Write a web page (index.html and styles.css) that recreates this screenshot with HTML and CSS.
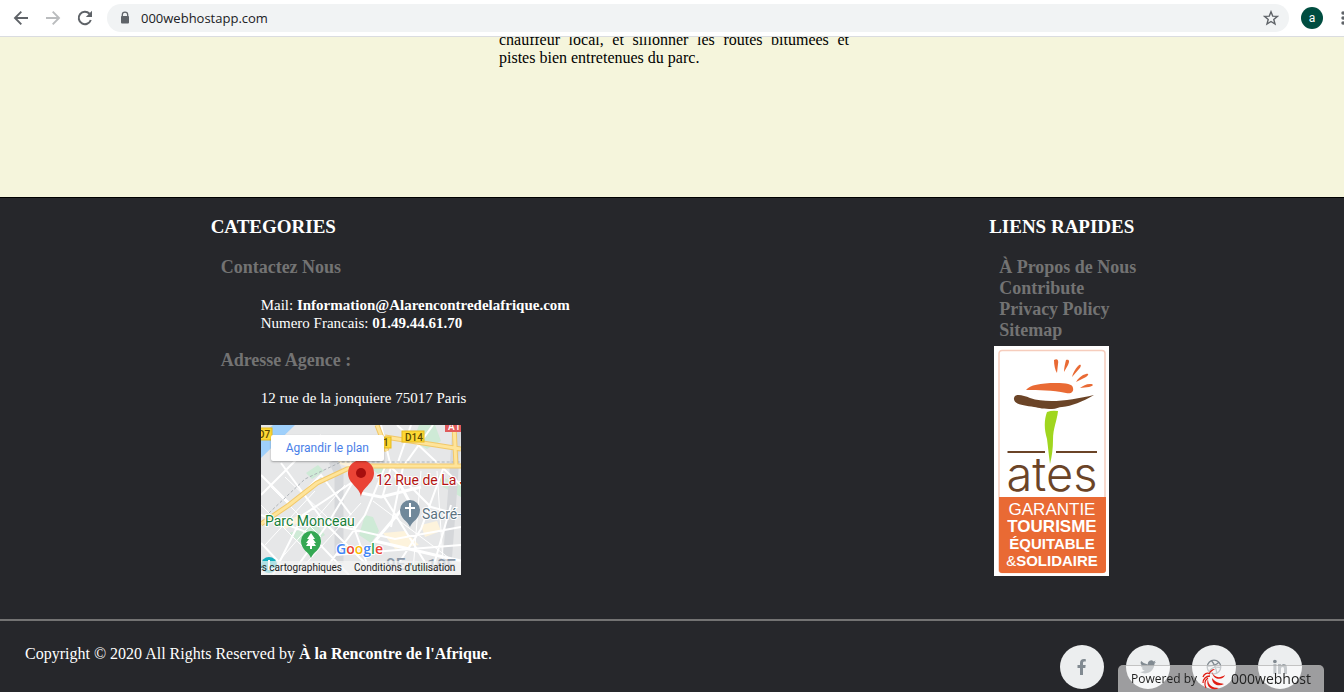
FILE: index.html
```html
<!DOCTYPE html>
<html lang="fr">
<head>
<meta charset="utf-8">
<title>À la Rencontre de l'Afrique</title>
<meta name="viewport" content="width=device-width, initial-scale=1">
<link rel="stylesheet" href="styles.css">
</head>
<body>
<header class="toolbar">
  <button class="tool" type="button" aria-label="Back"><svg viewBox="0 0 20 20"><path d="M17 10H4M10.300 3.700 4 10l6.300 6.300" fill="none" stroke="#5f6368" stroke-width="1.900"/></svg></button>
  <button class="tool" type="button" aria-label="Forward"><svg viewBox="0 0 20 20"><path d="M3 10h13M9.700 3.700 16 10l-6.300 6.300" fill="none" stroke="#babcbe" stroke-width="1.900"/></svg></button>
  <button class="tool" type="button" aria-label="Reload"><svg viewBox="0 0 20 20"><path d="M15.800 12A6.200 6.200 0 1 1 14.500 5.700" fill="none" stroke="#5f6368" stroke-width="2"/><path d="M17 2.800v6.200h-6.200z" fill="#5f6368"/></svg></button>
  <div class="address">
    <svg class="lock" viewBox="0 0 12 14"><path d="M3.300 6V3.800a2.700 2.700 0 0 1 5.400 0V6" fill="none" stroke="#5f6368" stroke-width="1.300"/><rect x="2" y="5" width="8" height="7.500" rx="1" fill="#5f6368"/></svg>
    <input class="url" type="text" value="000webhostapp.com" aria-label="Address">
    <button class="star" type="button" aria-label="Bookmark"><svg viewBox="0 0 16 16"><path d="m8 1.800 1.700 4.300 4.700.3-3.600 3 1.200 4.600L8 11.500 4 14l1.200-4.600-3.600-3 4.700-.3z" fill="none" stroke="#5f6368" stroke-width="1.400"/></svg></button>
  </div>
  <button class="avatar" type="button" aria-label="Profile">a</button>
  <button class="menu" type="button" aria-label="Menu"><svg viewBox="0 0 16 16"><g fill="#5f6368"><circle cx="8" cy="3" r="1.700"/><circle cx="8" cy="8" r="1.700"/><circle cx="8" cy="13" r="1.700"/></g></svg></button>
</header>

<main class="article">
  <p class="article-text">chauffeur local, et sillonner les routes bitumées et pistes bien entretenues du parc.</p>
</main>

<footer class="footer">
  <div class="columns">
    <section>
      <h3 class="title">CATEGORIES</h3>
      <h4 class="subtitle">Contactez Nous</h4>
      <p class="details">Mail: <b>Information@Alarencontredelafrique.com</b><br>Numero Francais: <b>01.49.44.61.70</b></p>
      <h4 class="subtitle">Adresse Agence :</h4>
      <p class="details">12 rue de la jonquiere 75017 Paris</p>
      <div class="map">
        <svg class="map-art" viewBox="0 0 200 150">
          <rect width="200" height="150" fill="#e6e7e8"/>
          <path d="M0 33 34 0H12L0 10z" fill="#9fd0fb"/>
          <g fill="#ceead6">
            <path d="m158 0 16 0 6 16-14 8-14-8zM104 90l8 2 6 14-8 12-12-8zM28 108l28-8 8 10-20 12zM176 50l24 10v12l-18-10zM144 140l16-4 12 14h-28zM45 48l12-8 6 6-12 8zM108 42l18 1-6 8z"/>
          </g>
          <g fill="#fdf3dc"><path d="m122 108 22-2 14 14-24 4zM160 100l16-4 4 10-16 6zM20 98l24-10 6 4-26 12zM86 20l12 16-10 6-12-4z"/></g>
          <path d="M72 36l6 12 0 90M196 0l-4 60-6 80" stroke="#d5d7da" stroke-width="9" fill="none"/>
          <g fill="none" stroke="#fff" stroke-width="2">
            <path d="M0 70 60 10M0 50l30 30 30-30 30 40M20 38l44 60 50 50M0 90l48 18 40 42M12 150l30-60 60-40M60 150l44-60 20-48M90 94l20 56M120 0l10 42-8 28 50 80M130 42l40 40 30 8M136 0l64 60M150 0l-14 40M172 0l-30 42-12 60M182 44l-22 60-30 46M96 36l0 14-30 50-36 50M64 98l70 16 66-12M74 130l126-10M190 80l-20 70M0 118l30 32"/>
            <path d="M100 68l20 4 40-10M134 50l14 26-34 40 86 20" stroke-width="3"/>
          </g>
          <g fill="none" stroke="#fff" stroke-width="1">
            <path d="M0 80l52 52M10 62l50 50M24 52l42 40M4 120l50-54M18 136l66-76M40 144l60-66M160 46l-8 100M176 46l6 90M112 76l80 60"/>
          </g>
          <path d="M8 88 44 54 80 37l120 0" fill="none" stroke="#aeb3b8" stroke-dasharray="3 2"/>
          <g fill="none" stroke-linejoin="round">
            <path d="M0 99 28 80 56 58 86 44 110 41 200 41M116 0l10 26M193 0l2 41M124 12l76 12" stroke="#f2c868" stroke-width="5"/>
            <path d="M0 99 28 80 56 58 86 44 110 41 200 41M116 0l10 26M193 0l2 41M124 12l76 12" stroke="#fee49a" stroke-width="3"/>
          </g>
          <g class="road-label">
            <rect x="-6" y="3" width="17" height="12" fill="#fdd835" stroke="#e5b91e"/><text x="-3" y="13">D7</text>
            <rect x="112" y="12" width="18" height="11" fill="#fdd835" stroke="#e5b91e"/><text x="122" y="21">1</text>
            <rect x="141" y="6" width="22" height="11" fill="#fdd835" stroke="#e5b91e"/><text x="144" y="16">D14</text>
            <rect x="184" y="-5" width="20" height="12" fill="#e05a5a"/><text class="road-white" x="187" y="5">A1</text>
          </g>
          <g class="district"><text x="125" y="145">9E</text><text x="166" y="146">10E</text></g>
          <circle cx="8" cy="140" r="8" fill="#12aebd"/><path d="M8 135v9h6" fill="none" stroke="#fff" stroke-width="2"/>
          <path d="M100 72c-1-10-13-13-13-24a13 13 0 0 1 26 0c0 11-12 14-13 24z" fill="#ea4335"/><circle cx="100" cy="48" r="5" fill="#a50e0e"/>
          <path d="M149 102c-2-6-10-8-10-17a10 10 0 0 1 20 0c0 9-8 11-10 17z" fill="#70889a"/><path d="M149 78v14M144 83h10" stroke="#fff" stroke-width="2"/>
          <path d="M50 133c-2-6-10-8-10-17a10 10 0 0 1 20 0c0 9-8 11-10 17z" fill="#34a853"/><path d="m50 108 4 6h-2l3 4h-2l2 3h-4v3h-2v-3h-4l2-3h-2l3-4h-2z" fill="#fff"/>
          <g class="place"><text x="115" y="60" fill="#b31412">12 Rue de La J</text><text x="4" y="101" fill="#188038">Parc Monceau</text><text x="161" y="94" fill="#5b7280">Sacré-C</text></g>
          <text class="brand" x="75" y="129"><tspan fill="#4285f4">G</tspan><tspan fill="#ea4335">o</tspan><tspan fill="#fbbc05">o</tspan><tspan fill="#4285f4">g</tspan><tspan fill="#34a853">l</tspan><tspan fill="#ea4335">e</tspan></text>
          <rect y="136" width="200" height="14" fill="#f5f5f5" opacity="0.700"/>
          <g class="legal"><text x="81" y="146" text-anchor="end">Données cartographiques</text><text x="93" y="146">Conditions d'utilisation</text></g>
        </svg>
        <a class="map-link" href="#plan">Agrandir le plan</a>
      </div>
    </section>
    <section>
      <h3 class="title">LIENS RAPIDES</h3>
      <ul class="links">
        <li><a href="#propos">À Propos de Nous</a></li>
        <li><a href="#contribute">Contribute</a></li>
        <li><a href="#privacy">Privacy Policy</a></li>
        <li><a href="#sitemap">Sitemap</a></li>
      </ul>
      <svg class="ates" viewBox="0 0 115 230" role="img" aria-label="ATES, garantie tourisme équitable et solidaire">
        <rect width="115" height="230" fill="#fff"/>
        <rect x="5" y="4.500" width="106" height="222" rx="3" fill="none" stroke="#f6cdbd" stroke-width="1.500"/>
        <path d="M5 151h107v73a3 3 0 0 1-3 3H8a3 3 0 0 1-3-3z" fill="#e96a34"/>
        <g fill="#e96a34">
          <path d="M32 44c4-5 14-7 30-7 10 0 17 1 17 5 1 4-2 6-7 5-14-3-27-3-40-3z"/>
          <path d="M60 14c3-2 5 0 4 4l-1 9c-2-3-3-8-3-13zM72 14c3-1 4 1 2 5l-4 7c0-4 1-8 2-12zM84 20c3-3 4 0 1 3l-7 8c1-4 3-8 6-11zM92 28c3-1 3 1 0 3l-10 5c2-4 6-7 10-8zM96 38c4 0 4 2-1 3l-9 1c3-2 6-4 10-4z"/>
        </g>
        <path d="M20 52c1-5 9-3 16 0 18 6 42 2 64-3-12 7-22 11-32 12-3 0-6 2-10 2-8 0-13-1-18-2-10-2-21-2-20-9z" fill="#6b4427"/>
        <path d="M53 66q5-2 11-1c-1 10-5 17-5 29 0 8-1 16-3 24-1-7-2-17-3-25-3-10-3-19 0-27z" fill="#a0d61f"/>
        <path d="M13.500 106h37.500M62 106h41" stroke="#6b4427" stroke-width="2"/>
        <text class="ates-name" x="58" y="145">ates</text>
        <g class="ates-lines"><text class="ates-light" x="58" y="169">GARANTIE</text><text class="ates-bold" x="58" y="186">TOURISME</text><text class="ates-small" x="58" y="203">ÉQUITABLE</text><text class="ates-small" x="58" y="220"><tspan class="ates-amp">&amp;</tspan>SOLIDAIRE</text></g>
      </svg>
    </section>
  </div>
  <div class="bottom">
    <p class="copyright">Copyright © 2020 All Rights Reserved by <b>À la Rencontre de l'Afrique</b>.</p>
    <nav class="social" aria-label="Social">
      <a href="#facebook" aria-label="Facebook"><svg viewBox="0 0 16 16"><path d="M6 16V9H3.500V6H6V4c0-2.600 1.500-4 3.800-4 1 0 2 .2 2 .2v2.400h-1.200c-1.200 0-1.600.7-1.600 1.500V6h2.700l-.4 3H9v7z"/></svg></a>
      <a href="#twitter" aria-label="Twitter"><svg viewBox="0 0 16 16"><path d="M14.400 4.700v.4c0 4.300-3.300 9.300-9.300 9.300A9.300 9.300 0 0 1 0 13c1.700.2 3.400-.3 4.800-1.400A3.300 3.300 0 0 1 1.800 9.300c.5.1 1 .1 1.500-.1A3.300 3.300 0 0 1 .7 6c.4.200 1 .4 1.500.4A3.300 3.300 0 0 1 1.200 2a9.300 9.300 0 0 0 6.700 3.400 3.300 3.300 0 0 1 5.600-3l2.100-.8-1.400 1.800 1.800-.5z"/></svg></a>
      <a href="#dribbble" aria-label="Dribbble"><svg viewBox="0 0 16 16"><g fill="none" stroke="#818a91" stroke-width="1.300"><circle cx="8" cy="8" r="6.800"/><path d="M5.500 1.700C8 4.500 10 9 10.800 14.200M1.300 7c4.500.2 9-.5 11.700-3.800M3.200 12.700C5 9 9 7.200 14.700 8.500"/></g></svg></a>
      <a href="#linkedin" aria-label="LinkedIn"><svg viewBox="0 0 16 16"><path d="M1.400 5.500h3V15h-3zM1 2.500a1.900 1.700 0 1 1 3.800 0 1.900 1.700 0 0 1-3.800 0M6 5.500h3v1.300c.6-1 1.500-1.500 2.800-1.500 2.300 0 3.200 1.400 3.200 4V15h-3v-5.100c0-1.300-.4-2-1.400-2C9.500 7.900 9 8.600 9 10v5H6z"/></svg></a>
    </nav>
  </div>
</footer>

<a class="powered" href="#000webhost">Powered by
  <svg viewBox="0 0 26 24"><g fill="#e01e14"><path d="M11 5c2 5 7 7 13 3-1 5-12 6-13-3z"/><path d="M11 11c3 4 7 5 12 6-5 3-12 1-12-6z"/><path d="M7 12c0 6 4 9 11 9-7 4-14-2-11-9z"/><path d="M8 7c0-3 3-5 6-5-2 1-4 3-6 5z"/></g><path d="M9 7C6 5 3 7 2 10M9 9c-4 0-7 3-7 7M7 11c-3 2-4 6-2 10" fill="none" stroke="#e01e14" stroke-width="1.300"/></svg>
  <span>000webhost</span></a>
</body>
</html>
```

FILE: styles.css
```css
* { box-sizing: border-box; }
body { margin: 0; background: #f5f5dc; color: #000; font: 16px/18px "Liberation Serif", "Times New Roman", serif; overflow-x: hidden; }
h3, h4, p, ul { margin: 0; padding: 0; }
button { padding: 0; border: 0; background: none; }
a { color: inherit; text-decoration: none; }
svg { display: block; }

.toolbar { display: flex; align-items: center; gap: 12px; height: 37px; padding-left: 11px; background: #fff; border-bottom: 1px solid #dadce0; overflow: hidden; }
.tool { flex: none; width: 20px; height: 20px; }
.address { flex: 1; min-width: 0; display: flex; align-items: center; height: 28px; padding: 0 10px 0 12px; border-radius: 14px; background: #f1f3f4; }
.lock { width: 12px; height: 14px; margin-right: 10px; }
.url { flex: 1; min-width: 0; padding: 0; border: 0; outline: 0; background: none; color: #202124; font: 13px/20px "Open Sans", sans-serif; }
.star { width: 16px; height: 16px; }
.avatar { flex: none; width: 22px; height: 22px; border-radius: 50%; background: #004d40; color: #fff; font: 12px/22px Roboto, sans-serif; }
.menu { flex: none; width: 16px; height: 16px; margin-right: -7px; }

.article { padding: 0 24px 130px 28px; overflow: hidden; }
.article-text { max-width: 350px; margin: -6px auto 0; text-align: justify; }

.footer { border-top: 1px solid #000; background: #26272b; color: #fff; }
.columns { display: flex; flex-wrap: wrap; justify-content: space-around; gap: 4px; padding: 18px 0 43px 3px; border-bottom: 2px solid #737373; }
.title { margin-bottom: 19px; font-size: 19px; line-height: 22px; }
.subtitle { margin-left: 10px; color: #737373; font-size: 18px; line-height: 21px; }
.details { margin: 18px 0 18px 50px; font-size: 15px; }
.map { position: relative; width: 200px; margin-left: 50px; overflow: hidden; }
.map-art { width: 100%; }
.map-link { position: absolute; top: 10px; left: 10px; padding: 0 15px; border-radius: 2px; background: #fff; color: #4a80e8; font: 12px/26px Roboto, sans-serif; box-shadow: 0 1px 2px rgba(0, 0, 0, 0.3); }
.road-label { font: 500 10px Roboto, sans-serif; fill: #5c4a00; }
.road-label .road-white { fill: #fff; }
.district { font: 500 17px Roboto, sans-serif; fill: #8b98a8; }
.place { font: 14px Roboto, sans-serif; stroke: #fff; stroke-width: 2px; paint-order: stroke; }
.brand { font: 600 14px "Open Sans", sans-serif; stroke: #fff; stroke-width: 2px; paint-order: stroke; }
.legal { font: 10px Roboto, sans-serif; fill: #222; }

.links { margin: 0 0 5px 10px; list-style: none; color: #737373; font-weight: bold; font-size: 18px; line-height: 21px; }
.ates { width: 115px; margin-left: 5px; }
.ates-name { font: 300 47px Inter, sans-serif; fill: #6b4427; text-anchor: middle; }
.ates-lines { font-family: "Liberation Sans", Arial, sans-serif; fill: #fff; text-anchor: middle; }
.ates-light { font-size: 17px; }
.ates-bold { font-size: 17px; font-weight: bold; }
.ates-small { font-size: 15px; font-weight: bold; }
.ates-amp { font-weight: normal; }

.bottom { display: flex; justify-content: space-between; gap: 24px; padding: 24px 42px 3px 25px; }
.social { display: flex; gap: 22px; }
.social a { display: grid; place-items: center; width: 44px; height: 44px; border-radius: 50%; background: #eceeef; }
.social svg { width: 16px; height: 16px; fill: #818a91; }

.powered { position: fixed; right: 20px; bottom: 0; display: flex; align-items: center; gap: 4px; height: 27px; padding: 0 12px; border: 1px solid rgba(160, 160, 160, 0.6); border-bottom: 0; border-radius: 5px 5px 0 0; background: rgba(255, 255, 255, 0.55); color: #222; font: 12px/26px "Open Sans", sans-serif; }
.powered svg { width: 26px; height: 24px; }
.powered span { font-size: 14px; }
```
